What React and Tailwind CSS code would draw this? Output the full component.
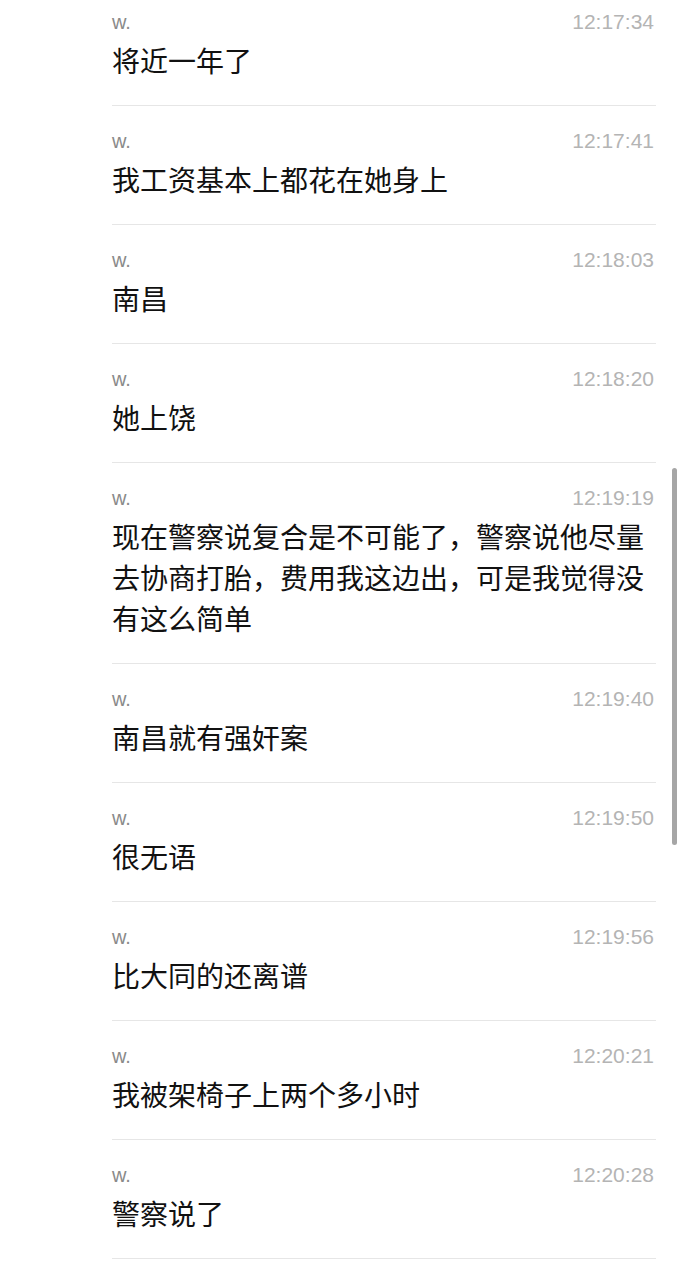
import React from 'react';

const messages = [
  { time: '12:17:34', text: '将近一年了' },
  { time: '12:17:41', text: '我工资基本上都花在她身上' },
  { time: '12:18:03', text: '南昌' },
  { time: '12:18:20', text: '她上饶' },
  { time: '12:19:19', text: '现在警察说复合是不可能了，警察说他尽量去协商打胎，费用我这边出，可是我觉得没有这么简单' },
  { time: '12:19:40', text: '南昌就有强奸案' },
  { time: '12:19:50', text: '很无语' },
  { time: '12:19:56', text: '比大同的还离谱' },
  { time: '12:20:21', text: '我被架椅子上两个多小时' },
  { time: '12:20:28', text: '警察说了' },
];

export default function App() {
  return (
    <div className="relative w-[683px] h-[1280px] overflow-hidden bg-white">
      <div className="mt-[-13px] ml-[112px] w-[544px]">
        {messages.map((m, i) => (
          <div key={i} className="border-b border-[#e6e6e6] pt-[21px] pb-[24px]">
            <div className="flex items-center justify-between h-[28px] font-['Liberation_Sans',sans-serif]">
              <span className="text-[20px] text-[#8a8a8a]">w.</span>
              <span className="text-[21px] text-[#b4b4b4] mr-[2px]">{m.time}</span>
            </div>
            <p className="mt-[4px] text-[28px] leading-[41px] text-[#111111] font-['Noto_Sans_CJK_SC',sans-serif]">
              {m.text}
            </p>
          </div>
        ))}
      </div>
      <div className="absolute left-[672px] top-[468px] w-[5px] h-[377px] rounded-full bg-[#a6a6a6]" />
    </div>
  );
}
